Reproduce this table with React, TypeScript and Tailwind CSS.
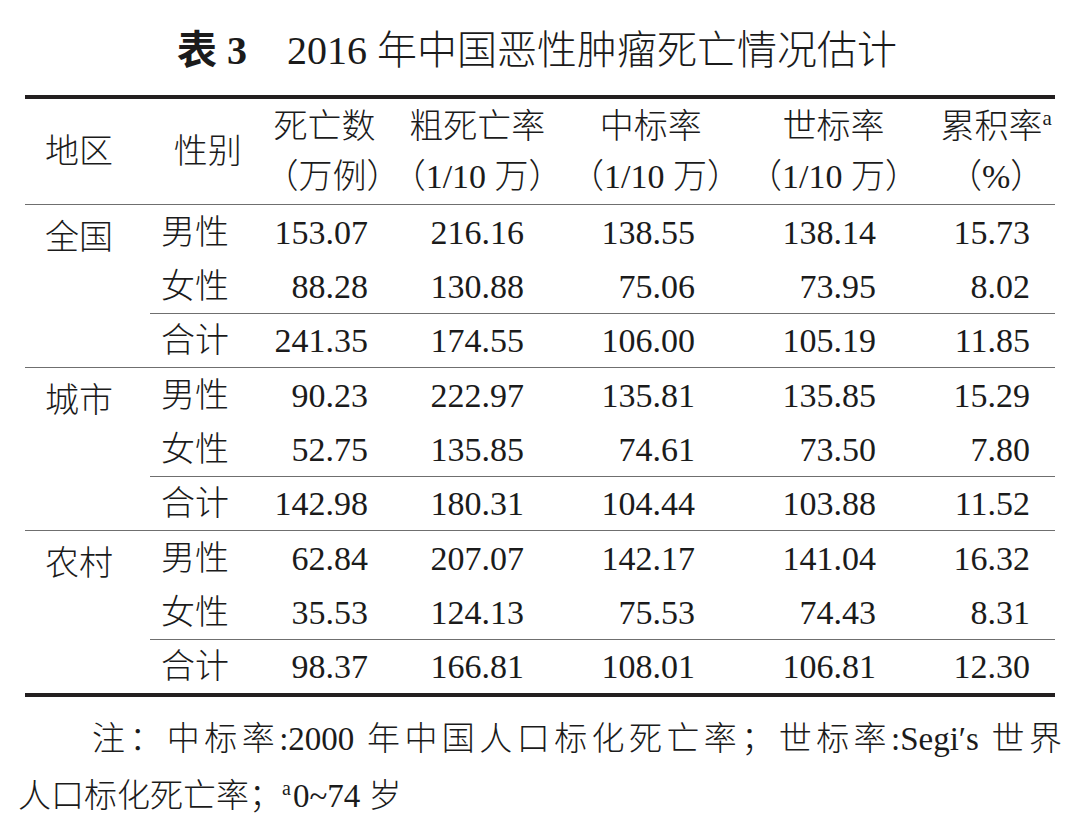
import React from 'react';

const FONT = { fontFamily: '"Liberation Serif", "Noto Sans CJK SC", serif' };

interface Row {
  sex: string;
  values: string[];
}

interface Group {
  region: string;
  rows: Row[];
}

const groups: Group[] = [
  {
    region: '全国',
    rows: [
      { sex: '男性', values: ['153.07', '216.16', '138.55', '138.14', '15.73'] },
      { sex: '女性', values: ['88.28', '130.88', '75.06', '73.95', '8.02'] },
      { sex: '合计', values: ['241.35', '174.55', '106.00', '105.19', '11.85'] },
    ],
  },
  {
    region: '城市',
    rows: [
      { sex: '男性', values: ['90.23', '222.97', '135.81', '135.85', '15.29'] },
      { sex: '女性', values: ['52.75', '135.85', '74.61', '73.50', '7.80'] },
      { sex: '合计', values: ['142.98', '180.31', '104.44', '103.88', '11.52'] },
    ],
  },
  {
    region: '农村',
    rows: [
      { sex: '男性', values: ['62.84', '207.07', '142.17', '141.04', '16.32'] },
      { sex: '女性', values: ['35.53', '124.13', '75.53', '74.43', '8.31'] },
      { sex: '合计', values: ['98.37', '166.81', '108.01', '106.81', '12.30'] },
    ],
  },
];

// widths and right padding of the five number columns
const numCols = [
  'w-[120px] pr-[15px]',
  'w-[186px] pr-[45px]',
  'w-[162px] pr-[36px]',
  'w-[204px] pr-[59px]',
  'w-[120px] pr-[25px]',
];

const headCols = ['w-[120px]', 'w-[186px]', 'w-[162px]', 'w-[204px]', 'w-[120px] pl-[2px]'];

function DataRow({ row, total }: { row: Row; total: boolean }) {
  return (
    <div
      className={
        'flex h-[54px] items-center ' + (total ? 'border-t border-[#6f6f6f]' : '')
      }
    >
      <div className="w-[113px] pl-[11px] font-light">{row.sex}</div>
      {row.values.map((v, i) => (
        <div key={i} className={'text-right ' + numCols[i]}>
          {v}
        </div>
      ))}
    </div>
  );
}

export default function App() {
  return (
    <div className="min-h-[840px] w-[1080px] bg-white text-[#1b1b1b]" style={FONT}>
      <div className="flex h-[95px] items-start justify-center pt-[23px] pr-[6px] text-[40px] leading-[56px]">
        <span className="font-bold">表 3</span>
        <span className="ml-[40px] font-light">2016 年中国恶性肿瘤死亡情况估计</span>
      </div>

      <div className="mx-[25px] border-t-[4px] border-b-[4px] border-[#231f20] text-[34px]">
        {/* header */}
        <div className="flex h-[106px] items-center border-b border-[#6f6f6f] font-light leading-[50px]">
          <div className="w-[127px] pl-[20px]">地区</div>
          <div className="w-[113px] pl-[22px]">性别</div>
          <div className={'text-center ' + headCols[0]}>
            <div>死亡数</div>
            <div>（万例）</div>
          </div>
          <div className={'text-center ' + headCols[1]}>
            <div>粗死亡率</div>
            <div>（1/10 万）</div>
          </div>
          <div className={'text-center ' + headCols[2]}>
            <div>中标率</div>
            <div>（1/10 万）</div>
          </div>
          <div className={'text-center ' + headCols[3]}>
            <div>世标率</div>
            <div>（1/10 万）</div>
          </div>
          <div className={'text-center ' + headCols[4]}>
            <div>
              累积率<span className="text-[21px] leading-none [vertical-align:0.6em]">a</span>
            </div>
            <div>（%）</div>
          </div>
        </div>

        {groups.map((g, gi) => (
          <div key={g.region} className={'flex ' + (gi > 0 ? 'border-t border-[#6f6f6f]' : '')}>
            <div className="flex h-[54px] w-[127px] items-center pt-[10px] pl-[20px] font-light">
              {g.region}
            </div>
            <div className="flex flex-col">
              {g.rows.map((r, ri) => (
                <DataRow key={r.sex} row={r} total={ri === 2} />
              ))}
            </div>
          </div>
        ))}
      </div>

      <div className="mt-[14px] pr-[18px] pl-[18px] text-[33px] font-light leading-[57px]">
        <div className="pl-[74px] text-justify [text-align-last:justify]">
          注：中标率:2000 年中国人口标化死亡率；世标率:Segi′s 世界
        </div>
        <div>
          人口标化死亡率；<span className="mr-[2px] text-[20px] leading-none [vertical-align:0.6em]">a</span>0~74 岁
        </div>
      </div>
    </div>
  );
}
